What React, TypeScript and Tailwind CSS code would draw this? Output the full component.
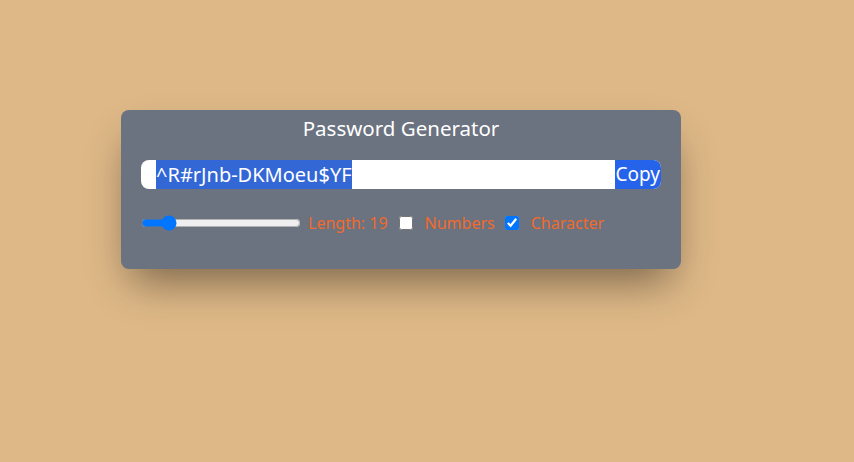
import { useState } from "react";

export default function App() {
  const [length, setLength] = useState(19);
  const [numbers, setNumbers] = useState(false);
  const [chars, setChars] = useState(true);
  const password = "^R#rJnb-DKMoeu$YF";

  return (
    <div className="min-h-screen w-full bg-[#deb887] pt-[110px] pl-[121px] font-['Noto_Sans',sans-serif]">
      <div className="w-[560px] h-[159px] rounded-lg bg-[#6b7280] px-5 pt-[4px] shadow-[0_22px_40px_-10px_rgba(0,0,0,0.45)]">
        <h1 className="text-center text-[20.5px] leading-7 text-white">Password Generator</h1>

        <div className="mt-[18px] flex h-[29px] overflow-hidden rounded-lg bg-white">
          <div className="flex flex-1 items-center pl-[15px] text-[20px] text-black">
            <span className="bg-[#3367d6] text-white leading-[29px]">{password}</span>
          </div>
          <button className="shrink-0 bg-[#2563eb] px-px text-[19px] leading-[29px] text-white">Copy</button>
        </div>

        <div className="mt-[22px] flex items-center text-base text-[#f26a2a]">
          <input
            type="range"
            min={6}
            max={100}
            value={length}
            onChange={(e) => setLength(Number(e.target.value))}
            className="w-[160px] cursor-pointer"
          />
          <label className="ml-[7px]">Length: {length}</label>
          <input
            type="checkbox"
            checked={numbers}
            onChange={() => setNumbers((v) => !v)}
            className="ml-[11px] h-[14px] w-[14px]"
          />
          <label className="ml-[12px]">Numbers</label>
          <input
            type="checkbox"
            checked={chars}
            onChange={() => setChars((v) => !v)}
            className="ml-[10px] h-[14px] w-[14px]"
          />
          <label className="ml-[12px]">Character</label>
        </div>
      </div>
    </div>
  );
}
